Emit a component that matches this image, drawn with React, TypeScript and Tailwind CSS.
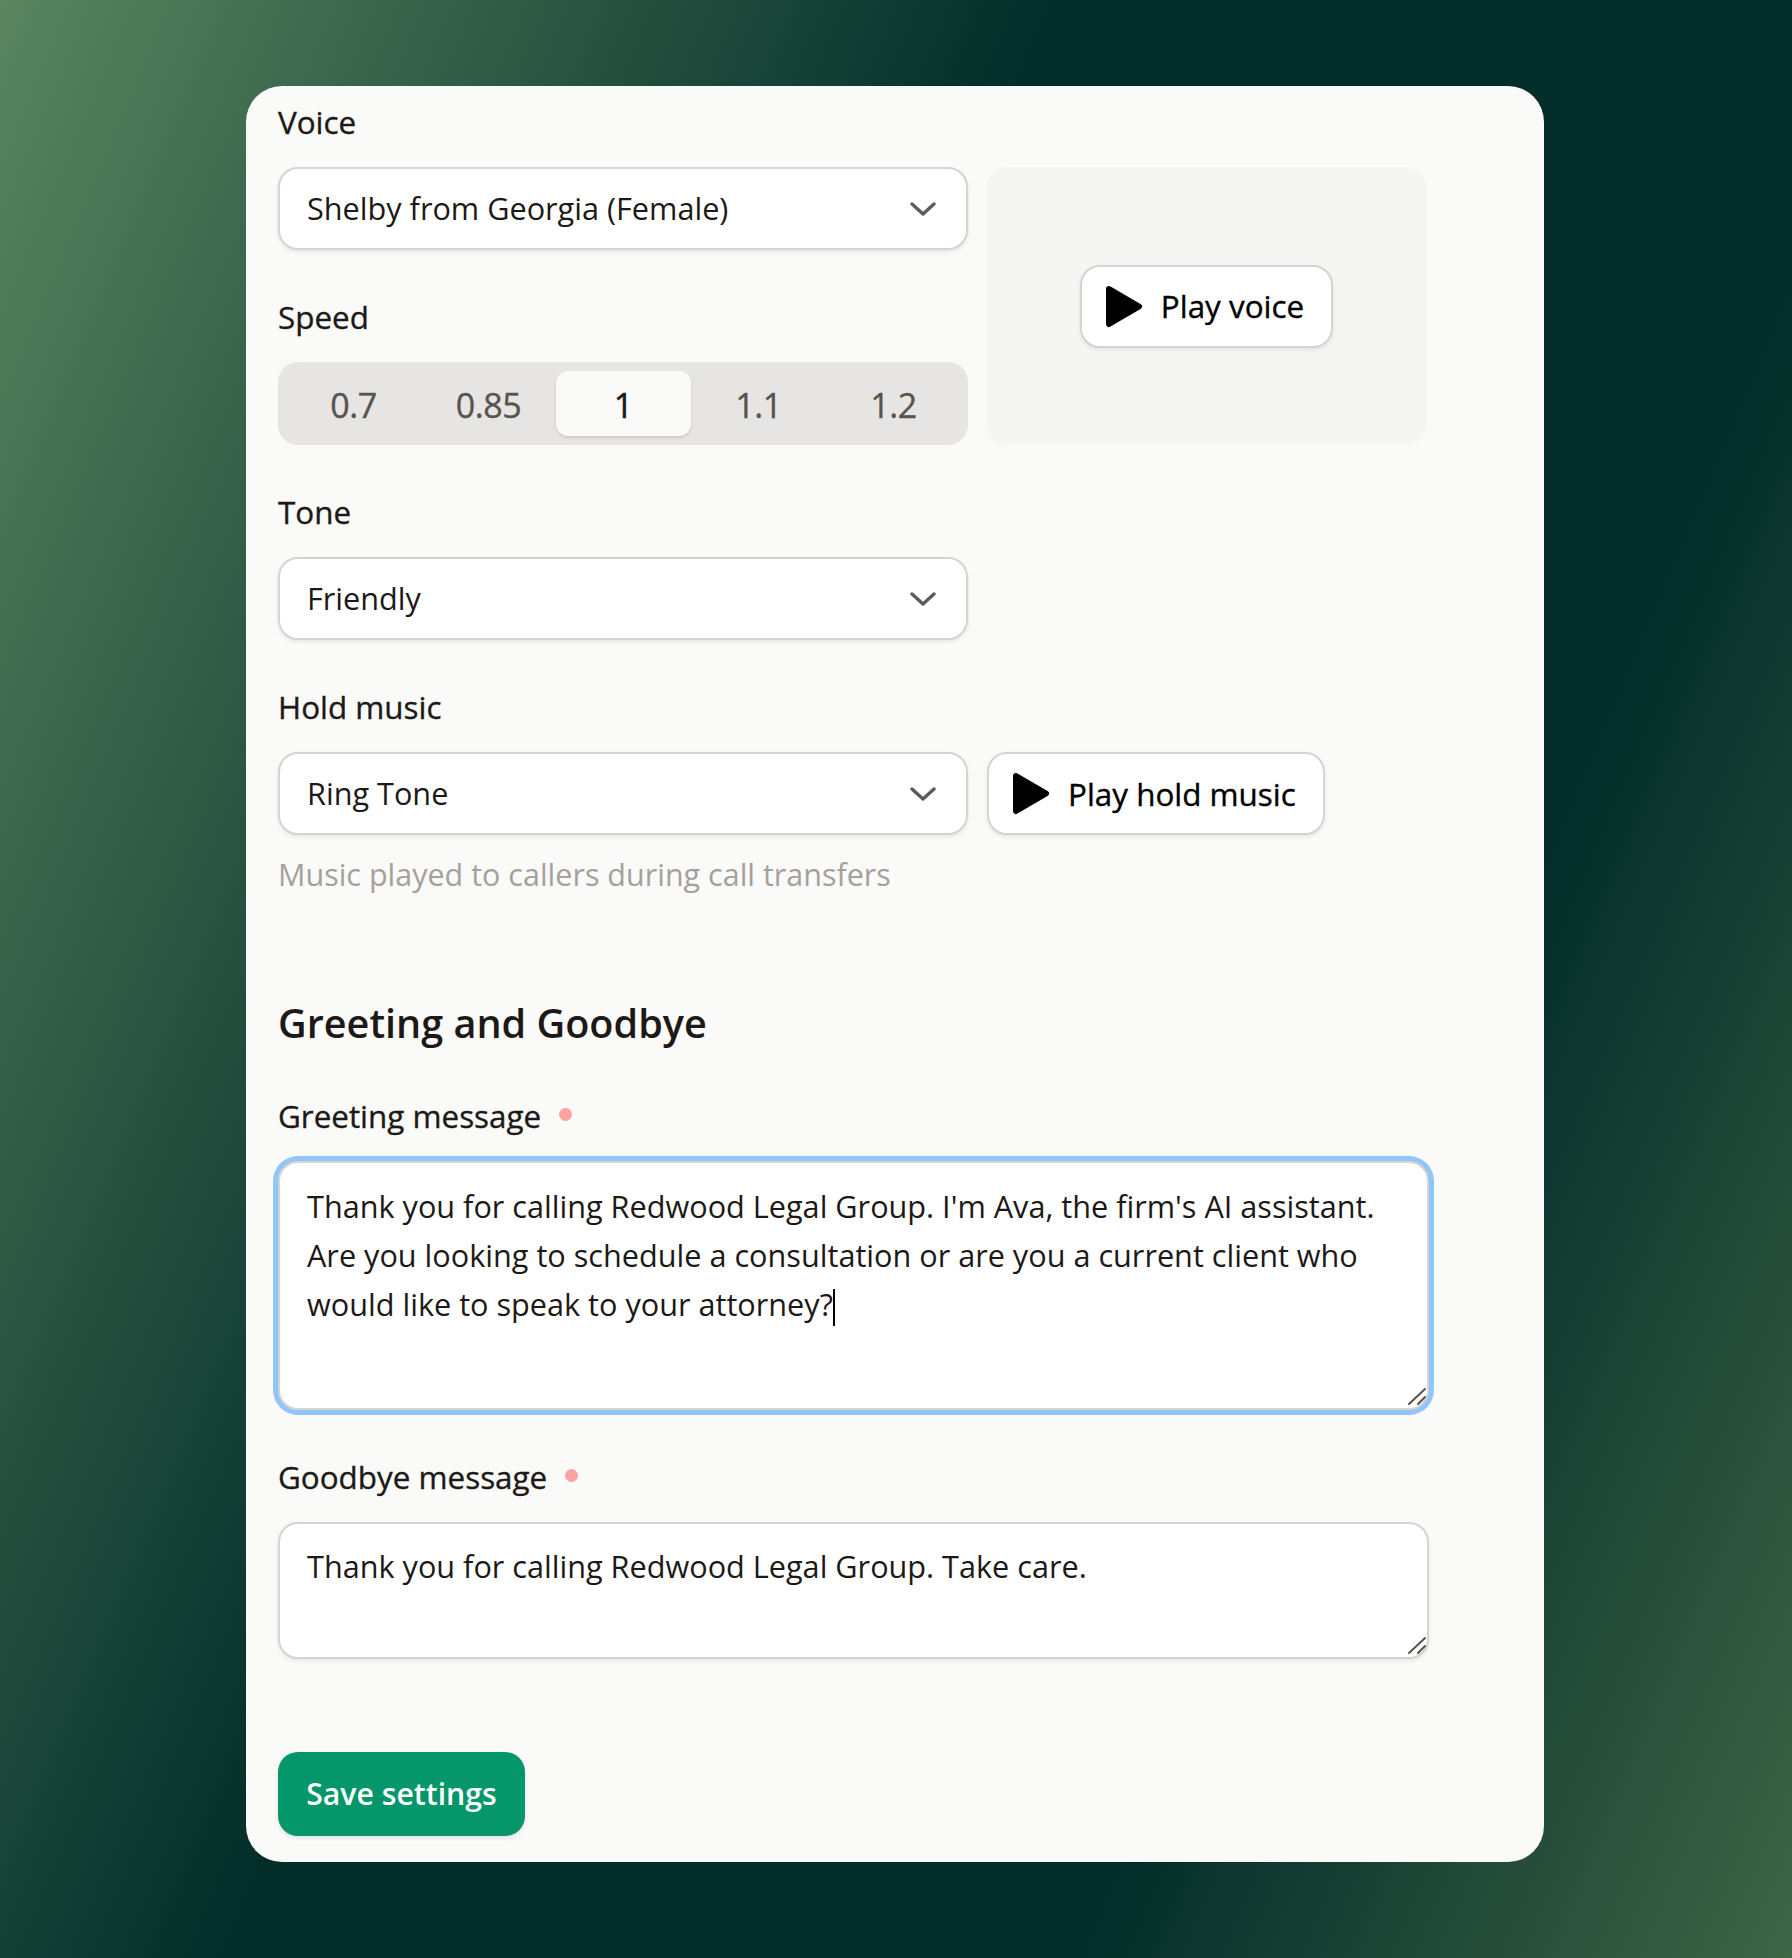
const fontStack = "font-['Open_Sans','Noto_Sans',sans-serif]";

function Chevron() {
  return (
    <svg width="26" height="14" viewBox="0 0 26 14" fill="none" className="shrink-0">
      <path d="M2 2 L13 12 L24 2" stroke="#5f5b58" strokeWidth="3.4" strokeLinecap="round" strokeLinejoin="round" />
    </svg>
  );
}

function PlayIcon() {
  return (
    <svg width="38" height="43" viewBox="0 0 38 43" className="shrink-0">
      <path d="M4 4 L34 21.5 L4 39 Z" fill="#000" stroke="#000" strokeWidth="6" strokeLinejoin="round" />
    </svg>
  );
}

function Resizer() {
  return (
    <svg width="20" height="19" viewBox="0 0 20 19" fill="none" className="absolute right-0 bottom-[2px]">
      <path d="M2 17 L18 2 M11 17 L18 10" stroke="#57534e" strokeWidth="2" strokeLinecap="round" />
    </svg>
  );
}

function Label({ children, dot }: { children: string; dot?: boolean }) {
  return (
    <div className="h-10 flex items-center text-[31.4px] [-webkit-text-stroke:0.35px] text-stone-900">
      <span>{children}</span>
      {dot && <span className="ml-[18px] mb-[3px] w-[13px] h-[13px] rounded-full bg-red-300" />}
    </div>
  );
}

function Select({ value }: { value: string }) {
  return (
    <div className="w-[690px] h-[83px] mt-6 flex items-center justify-between pl-[27px] pr-[30px] bg-white border-2 border-stone-300 rounded-[20px] shadow-[0_2px_4px_rgba(0,0,0,0.08)] text-[30.65px] text-stone-900">
      <span className="pt-px">{value}</span>
      <Chevron />
    </div>
  );
}

function PlayButton({ children }: { children: string }) {
  return (
    <button className="h-[83px] flex items-center gap-[18px] pl-[23px] pr-[27px] bg-white border-2 border-stone-300 rounded-[20px] shadow-[0_2px_4px_rgba(0,0,0,0.08)] text-[31.4px] [-webkit-text-stroke:0.35px] text-black">
      <PlayIcon />
      <span>{children}</span>
    </button>
  );
}

const speeds = ['0.7', '0.85', '1', '1.1', '1.2'];

export default function App() {
  return (
    <div className={`w-[1792px] h-[1958px] overflow-hidden pt-[86px] pl-[246px] bg-[linear-gradient(113deg,#5a8560_0%,#032e2a_40%,#032e2a_73%,#3e6546_100%)] ${fontStack}`}>
      <div className="w-[1298px] h-[1776px] pt-4 pl-[32px] pr-[33px] bg-stone-50 rounded-[36px]">
        <div className="mb-px">
          <Label>Voice</Label>
        </div>

        <div className="flex gap-[19px]">
          <div>
            <Select value="Shelby from Georgia (Female)" />
            <div className="mt-[47px]">
              <Label>Speed</Label>
            </div>
            <div className="mt-[25px] w-[690px] h-[83px] flex items-center pl-[8px] bg-stone-200 rounded-[20px]">
              {speeds.map((s) => (
                <div
                  key={s}
                  className={
                    s === '1'
                      ? 'w-[135px] h-[65px] pt-[3px] flex items-center justify-center bg-stone-50 rounded-[12px] shadow-[0_2px_3px_rgba(0,0,0,0.12)] text-[34px] [-webkit-text-stroke:0.5px] text-stone-900'
                      : 'w-[135px] h-[65px] pt-[3px] flex items-center justify-center text-[34px] tracking-[-0.4px] [-webkit-text-stroke:0.35px] text-stone-600'
                  }
                >
                  {s}
                </div>
              ))}
            </div>
          </div>
          <div className="mt-6 w-[439px] h-[278px] flex items-center justify-center bg-stone-100 rounded-[20px]">
            <PlayButton>Play voice</PlayButton>
          </div>
        </div>

        <div className="mt-[47px] pb-px">
          <Label>Tone</Label>
        </div>
        <Select value="Friendly" />

        <div className="mt-[47px] pb-px">
          <Label>Hold music</Label>
        </div>
        <div className="flex items-end gap-[19px]">
          <Select value="Ring Tone" />
          <PlayButton>Play hold music</PlayButton>
        </div>
        <p className="mt-5 h-10 flex items-center text-[30.5px] text-stone-400">
          Music played to callers during call transfers
        </p>

        <h2 className="mt-[104px] h-[50px] flex items-center text-[39.6px] font-semibold text-stone-900">
          Greeting and Goodbye
        </h2>

        <div className="mt-[47px]">
          <Label dot>Greeting message</Label>
        </div>
        <div className="relative mt-[25px] w-[1151px] h-[249px] pt-[19px] pl-[27px] bg-white border-2 border-stone-300 rounded-[20px] shadow-[0_0_0_5px_#93c5fd] text-[30.65px] leading-[49px] text-stone-900">
          Thank you for calling Redwood Legal Group. I'm Ava, the firm's AI assistant.
          <br />
          Are you looking to schedule a consultation or are you a current client who
          <br />
          would like to speak to your attorney?
          <span className="inline-block align-middle w-[2px] h-[37px] bg-black" />
          <Resizer />
        </div>

        <div className="mt-[47px]">
          <Label dot>Goodbye message</Label>
        </div>
        <div className="relative mt-[25px] w-[1151px] h-[137px] pt-[18px] pl-[27px] bg-white border-2 border-stone-300 rounded-[20px] shadow-[0_2px_4px_rgba(0,0,0,0.08)] text-[30.65px] leading-[49px] text-stone-900">
          Thank you for calling Redwood Legal Group. Take care.
          <Resizer />
        </div>

        <button className="mt-[93px] w-[247px] h-[84px] flex items-center justify-center bg-[#059669] rounded-[20px] shadow-[0_2px_4px_rgba(0,0,0,0.1)] text-[30.2px] font-semibold text-white">
          Save settings
        </button>
      </div>
    </div>
  );
}
